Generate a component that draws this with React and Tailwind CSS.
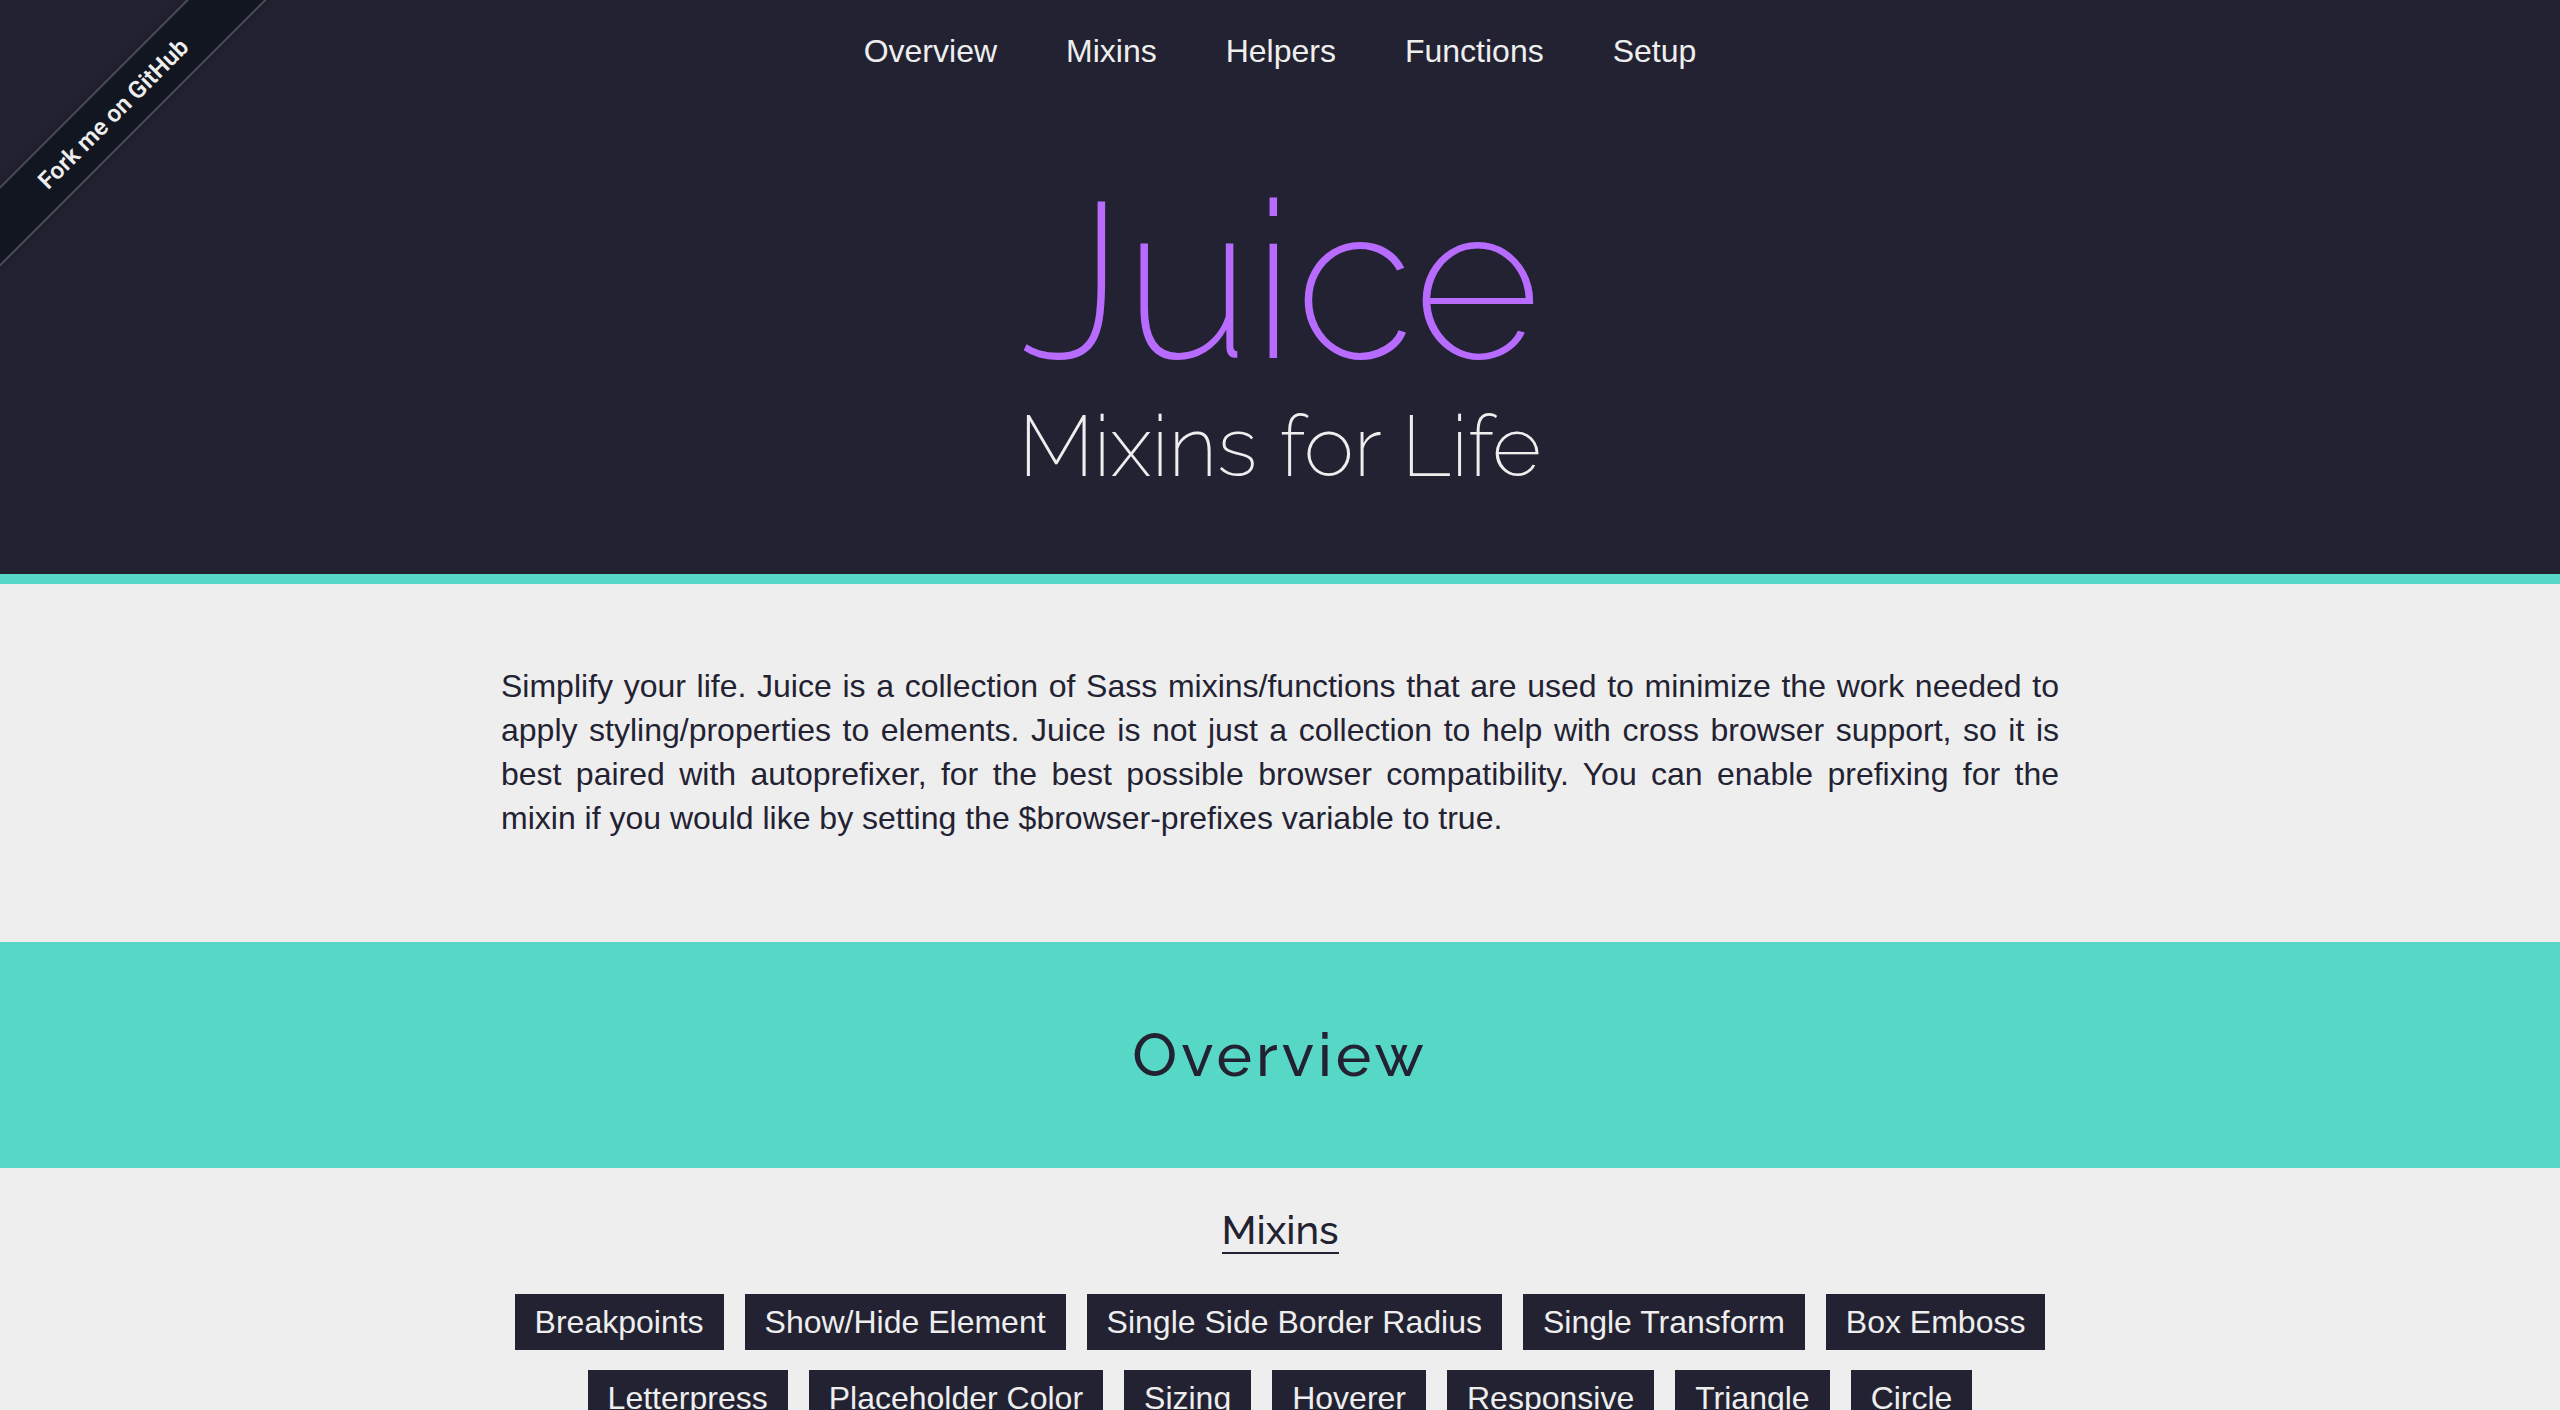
const sections = ["Overview", "Mixins", "Helpers", "Functions", "Setup"];

const mixins = [
  "Breakpoints",
  "Show/Hide Element",
  "Single Side Border Radius",
  "Single Transform",
  "Box Emboss",
  "Letterpress",
  "Placeholder Color",
  "Sizing",
  "Hoverer",
  "Responsive",
  "Triangle",
  "Circle",
];

function slug(name) {
  return "#" + name.toLowerCase().replace(/[^a-z]+/g, "-");
}

function ForkRibbon() {
  return (
    <div className="pointer-events-none absolute top-0 left-0 flex size-[226px] items-center justify-center">
      <a
        href="#github"
        className="pointer-events-auto flex h-[57px] w-[440px] shrink-0 -rotate-45 items-center justify-center border-y-2 border-[#4b4e59] bg-[#121621] font-['Roboto',sans-serif] text-[24px] font-semibold whitespace-nowrap text-[#eeeeee] shadow-[0_0_10px_rgba(0,0,0,0.25)]"
      >
        Fork me on GitHub
      </a>
    </div>
  );
}

function Header() {
  return (
    <header className="relative overflow-hidden border-b-10 border-[#57d8c7] bg-[#232232] pb-[78px] text-center text-[#eeeeee]">
      <ForkRibbon />
      <nav className="flex justify-center gap-[69px] pt-8">
        {sections.map((name) => (
          <a key={name} href={slug(name)} className="leading-[38px]">
            {name}
          </a>
        ))}
      </nav>
      <h1 className="mt-[94px] font-['Raleway','Lato',sans-serif] text-[220px] leading-[232px] font-extralight text-[#b86bff]">
        Juice
      </h1>
      <p className="font-['Raleway','Lato',sans-serif] text-[85px] leading-[100px] font-extralight">Mixins for Life</p>
    </header>
  );
}

export default function App() {
  return (
    <div className="h-screen overflow-hidden bg-[#eeeeee] font-['Liberation_Sans',Arial,sans-serif] text-[32px] text-[#232232]">
      <Header />
      <main>
        <p className="mx-auto max-w-[1558px] pt-20 pb-[102px] text-justify leading-11">
          Simplify your life. Juice is a collection of Sass mixins/functions that are used to minimize the work needed to
          apply styling/properties to elements. Juice is not just a collection to help with cross browser support, so it
          is best paired with autoprefixer, for the best possible browser compatibility. You can enable prefixing for the
          mixin if you would like by setting the $browser-prefixes variable to true.
        </p>
        <section id="overview">
          <h2 className="bg-[#57d8c7] py-20 text-center font-['Raleway','Lato',sans-serif] text-[60px] leading-[66px] font-medium tracking-[4px]">
            Overview
          </h2>
          <div className="mx-auto flex max-w-[1558px] flex-col items-center">
            <h3 className="mt-10 border-b-2 border-[#232232] font-['Raleway','Lato',sans-serif] text-[40px] leading-11 font-medium">
              Mixins
            </h3>
            <ul className="mt-10 flex flex-wrap justify-center gap-x-[21px] gap-y-5">
              {mixins.map((name) => (
                <li key={name}>
                  <a href={slug(name)} className="block bg-[#232232] px-5 py-2 leading-10 text-[#eeeeee]">
                    {name}
                  </a>
                </li>
              ))}
            </ul>
          </div>
        </section>
      </main>
    </div>
  );
}
